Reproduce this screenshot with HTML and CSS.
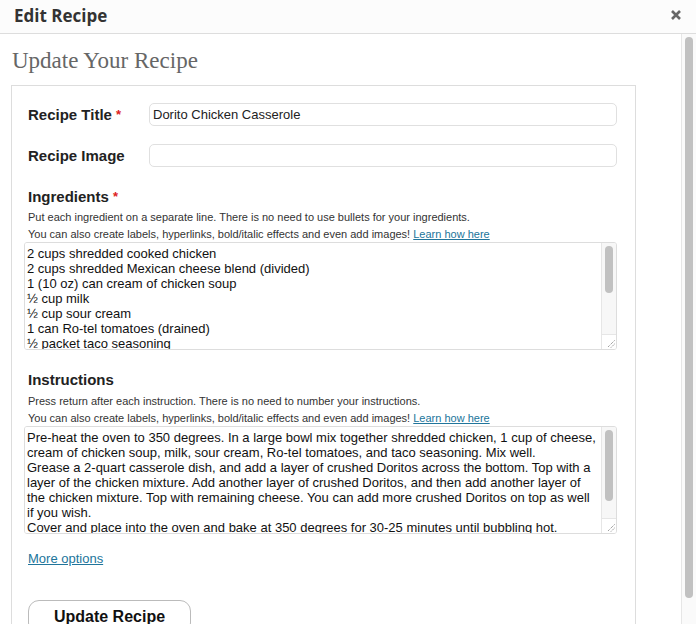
FILE: index.html
```html
<!DOCTYPE html>
<html>
<head>
<meta charset="utf-8">
<title>Edit Recipe</title>
<link rel="stylesheet" href="styles.css">
</head>
<body>
<div class="modal">
  <div class="modal-header">
    <div class="modal-title">Edit Recipe</div>
    <svg class="close" width="10" height="10" viewBox="0 0 10 10"><path d="M1 1 L9 9 M9 1 L1 9" stroke="#666" stroke-width="2.6" stroke-linecap="butt"/></svg>
  </div>
  <div class="modal-body">
    <div class="body-content">
      <h1 class="page-title">Update Your Recipe</h1>
      <div class="form-box">
        <div class="row">
          <label class="row-label">Recipe Title <span class="req">*</span></label>
          <input class="text-input" type="text" value="Dorito Chicken Casserole">
        </div>
        <div class="row">
          <label class="row-label">Recipe Image</label>
          <input class="text-input" type="text" value="">
        </div>
        <div class="section">
          <div class="section-label">Ingredients <span class="req">*</span></div>
          <div class="help">Put each ingredient on a separate line. There is no need to use bullets for your ingredients.<br>You can also create labels, hyperlinks, bold/italic effects and even add images! <a class="link" href="#">Learn how here</a></div>
          <div class="area-wrap">
            <textarea class="area">2 cups shredded cooked chicken
2 cups shredded Mexican cheese blend (divided)
1 (10 oz) can cream of chicken soup
½ cup milk
½ cup sour cream
1 can Ro-tel tomatoes (drained)
½ packet taco seasoning
</textarea>
            <div class="tscroll">
              <div class="ttrack"><div class="tthumb thumb-ing"></div></div>
              <div class="tcorner"><svg width="10" height="10" viewBox="0 0 10 10"><path d="M9.5 2.5 L2.5 9.5 M9.5 6 L6 9.5" stroke="#777" stroke-width="1" stroke-dasharray="1 1"/></svg></div>
            </div>
          </div>
        </div>
        <div class="section">
          <div class="section-label">Instructions</div>
          <div class="help help-2">Press return after each instruction. There is no need to number your instructions.<br>You can also create labels, hyperlinks, bold/italic effects and even add images! <a class="link" href="#">Learn how here</a></div>
          <div class="area-wrap">
            <textarea class="area">Pre-heat the oven to 350 degrees. In a large bowl mix together shredded chicken, 1 cup of cheese, cream of chicken soup, milk, sour cream, Ro-tel tomatoes, and taco seasoning. Mix well.
Grease a 2-quart casserole dish, and add a layer of crushed Doritos across the bottom. Top with a layer of the chicken mixture. Add another layer of crushed Doritos, and then add another layer of the chicken mixture. Top with remaining cheese. You can add more crushed Doritos on top as well if you wish.
Cover and place into the oven and bake at 350 degrees for 30-25 minutes until bubbling hot.
</textarea>
            <div class="tscroll">
              <div class="ttrack"><div class="tthumb thumb-ins"></div></div>
              <div class="tcorner"><svg width="10" height="10" viewBox="0 0 10 10"><path d="M9.5 2.5 L2.5 9.5 M9.5 6 L6 9.5" stroke="#777" stroke-width="1" stroke-dasharray="1 1"/></svg></div>
            </div>
          </div>
        </div>
        <a class="more" href="#">More options</a>
        <button class="submit" type="button">Update Recipe</button>
      </div>
    </div>
    <div class="vscroll"><div class="vthumb"></div></div>
  </div>
</div>
</body>
</html>
```
FILE: styles.css
```css
html, body {
  margin: 0;
  padding: 0;
  background: #fff;
}
.modal {
  width: 696px;
  height: 624px;
  display: flex;
  flex-direction: column;
  font-family: "Liberation Sans", Arial, sans-serif;
  color: #222;
  overflow: hidden;
}
.modal-header {
  height: 33px;
  flex: none;
  display: flex;
  align-items: center;
  justify-content: space-between;
  padding: 0 15px 0 14px;
  background: #fcfcfc;
  border-bottom: 1px solid #dddddd;
}
.modal-title {
  font-family: "Open Sans", sans-serif;
  font-weight: 700;
  font-size: 17px;
  line-height: 23px;
  color: #333;
  margin-top: -3px;
}
.close {
  display: block;
  margin-top: -3px;
}
.modal-body {
  height: 590px;
  display: flex;
  overflow: hidden;
  background: #fff;
}
.body-content {
  flex: 1;
  min-width: 0;
}
.vscroll {
  width: 15px;
  flex: none;
  box-sizing: border-box;
  padding: 3px 3px 0 3px;
  background: #fafafa;
  border-left: 1px solid #e6e6e6;
}
.vthumb {
  height: 561px;
  background: #c1c1c1;
  border-radius: 5px;
}
.page-title {
  margin: 14px 0 11px 12px;
  font-family: "Liberation Serif", "Times New Roman", serif;
  font-weight: normal;
  font-size: 23px;
  line-height: 26px;
  color: #666;
}
.form-box {
  width: 625px;
  box-sizing: border-box;
  margin-left: 11px;
  border: 1px solid #dddddd;
  padding: 17px 18px 16px 16px;
}
.row {
  display: flex;
  align-items: center;
  margin-bottom: 18px;
}
.row + .row {
  margin-bottom: 0;
}
.row-label {
  width: 121px;
  flex: none;
  font-weight: bold;
  font-size: 15px;
  color: #222;
}
.req {
  color: #dd2222;
  font-size: 13px;
  vertical-align: 1px;
}
.text-input {
  flex: 1;
  box-sizing: border-box;
  height: 23px;
  margin: 0;
  padding: 3px 3px;
  border: 1px solid #e0e0e0;
  border-radius: 5px;
  font-family: "Liberation Sans", Arial, sans-serif;
  font-size: 13px;
  line-height: 15px;
  color: #222;
  outline: none;
}
.section {
  margin-top: 20px;
}
.section-label {
  font-weight: bold;
  font-size: 15px;
  line-height: 20px;
  color: #222;
}
.help {
  padding-top: 2px;
  font-size: 11px;
  line-height: 17px;
  color: #333;
}
.help-2 {
  padding-top: 3px;
  margin-bottom: -1px;
}
.link {
  color: #21759b;
  text-decoration: underline;
}
.area-wrap {
  display: flex;
  box-sizing: border-box;
  width: 593px;
  height: 108px;
  margin: -1px 0 1px -4px;
  border: 1px solid #dddddd;
  border-radius: 3px;
  overflow: hidden;
  background: #fff;
}
.area {
  flex: 1;
  min-width: 0;
  display: block;
  box-sizing: border-box;
  height: 106px;
  margin: 0;
  padding: 3px 2px 2px 2px;
  border: none;
  font-family: "Liberation Sans", Arial, sans-serif;
  font-size: 13px;
  line-height: 15px;
  color: #111;
  resize: none;
  overflow: hidden;
  outline: none;
  background: #fff;
}
.tscroll {
  width: 15px;
  flex: none;
  display: flex;
  flex-direction: column;
  box-sizing: border-box;
  border-left: 1px solid #e6e6e6;
  background: #f7f7f7;
}
.ttrack {
  flex: 1;
  padding: 3px 3px 0 3px;
}
.tthumb {
  background: #c1c1c1;
  border-radius: 5px;
}
.thumb-ing {
  height: 47px;
}
.thumb-ins {
  height: 71px;
}
.tcorner {
  height: 15px;
  flex: none;
  box-sizing: border-box;
  border-top: 1px solid #e6e6e6;
  background: #fff;
  display: flex;
  align-items: flex-end;
  justify-content: flex-end;
  padding: 0 1px 1px 0;
}
.tcorner svg {
  display: block;
}
.more {
  display: block;
  width: max-content;
  margin-top: 17px;
  font-size: 13px;
  line-height: 15px;
  color: #21759b;
  text-decoration: underline;
}
.submit {
  display: block;
  margin-top: 34px;
  width: 163px;
  height: 34px;
  padding: 0;
  border: 1px solid #bbbbbb;
  border-radius: 11px;
  background: #fff;
  font-family: "Liberation Sans", Arial, sans-serif;
  font-weight: bold;
  font-size: 16px;
  line-height: 20px;
  color: #111;
}
```
